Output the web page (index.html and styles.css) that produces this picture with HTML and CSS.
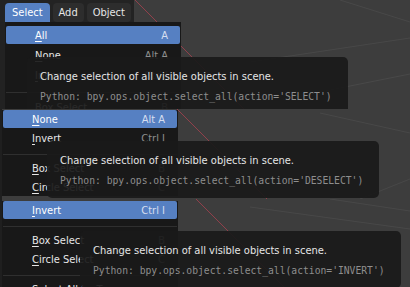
FILE: index.html
```html
<!DOCTYPE html>
<html lang="en">
<head>
  <meta charset="UTF-8" />
  <title>Select menu tooltips</title>
  <link rel="stylesheet" href="styles.css">
</head>
<body>
  <!-- Кадр 1: пункт All -->
  <section class="shot shot-all">
    <svg class="viewport" viewBox="0 0 410 109" preserveAspectRatio="none">
      <line x1="135" y1="0" x2="244" y2="109" class="axis-x"/>
      <line x1="250" y1="62" x2="410" y2="38" class="grid"/>
      <line x1="290" y1="98" x2="410" y2="74" class="grid"/>
      <line x1="340" y1="0" x2="410" y2="22" class="grid"/>
    </svg>
    <div class="header">
      <span class="tab active">Select</span>
      <span class="tab">Add</span>
      <span class="tab">Object</span>
    </div>
    <div class="menu">
      <div class="item active"><span><u>A</u>ll</span><span class="key">A</span></div>
      <div class="item"><span><u>N</u>one</span><span class="key">Alt A</span></div>
      <div class="item"><span><u>I</u>nvert</span><span class="key">Ctrl I</span></div>
      <div class="sep"></div>
      <div class="item"><span><u>B</u>ox Select</span><span class="key">B</span></div>
    </div>
    <div class="tip">
      <p>Change selection of all visible objects in scene.</p>
      <p class="py">Python: bpy.ops.object.select_all(action='SELECT')</p>
    </div>
  </section>

  <!-- Кадр 2: пункт None -->
  <section class="shot shot-none">
    <svg class="viewport" viewBox="0 0 410 90" preserveAspectRatio="none">
      <line x1="177" y1="0" x2="267" y2="90" class="axis-x"/>
      <line x1="320" y1="4" x2="410" y2="24" class="grid"/>
      <line x1="360" y1="90" x2="410" y2="70" class="grid"/>
    </svg>
    <div class="menu">
      <div class="item active"><span><u>N</u>one</span><span class="key">Alt A</span></div>
      <div class="item"><span><u>I</u>nvert</span><span class="key">Ctrl I</span></div>
      <div class="sep"></div>
      <div class="item"><span><u>B</u>ox Select</span><span class="key">B</span></div>
      <div class="item"><span><u>C</u>ircle Select</span><span class="key">C</span></div>
    </div>
    <div class="tip">
      <p>Change selection of all visible objects in scene.</p>
      <p class="py">Python: bpy.ops.object.select_all(action='DESELECT')</p>
    </div>
  </section>

  <!-- Кадр 3: пункт Invert -->
  <section class="shot shot-invert">
    <svg class="viewport" viewBox="0 0 410 88" preserveAspectRatio="none">
      <line x1="196" y1="0" x2="284" y2="88" class="axis-x"/>
      <line x1="250" y1="8" x2="410" y2="30" class="grid"/>
      <line x1="330" y1="0" x2="410" y2="12" class="grid"/>
    </svg>
    <div class="menu">
      <div class="item active"><span><u>I</u>nvert</span><span class="key">Ctrl I</span></div>
      <div class="sep"></div>
      <div class="item"><span><u>B</u>ox Select</span><span class="key">B</span></div>
      <div class="item"><span><u>C</u>ircle Select</span><span class="key">C</span></div>
      <div class="sep"></div>
      <div class="item"><span><u>S</u>elect All by Type</span><span class="key"></span></div>
    </div>
    <div class="tip">
      <p>Change selection of all visible objects in scene.</p>
      <p class="py">Python: bpy.ops.object.select_all(action='INVERT')</p>
    </div>
  </section>
</body>
</html>
```

FILE: styles.css
```css
:root {
  --accent: #5680c2;
  --menu-bg: #181818;
  --view-bg: #3d3d3d;
  --text: #e6e6e6;
  --dim: #8e8e8e;
}
* { box-sizing: border-box; }
body {
  margin: 0;
  background: var(--view-bg);
  color: var(--text);
  font-family: 'DejaVu Sans Condensed', 'DejaVu Sans', sans-serif;
  font-stretch: condensed;
  font-size: 11px;
  overflow: hidden;
}
u {
  text-decoration-thickness: 1px;
  text-underline-offset: 2px;
}
/* Кадры */
.shot {
  position: relative;
  overflow: hidden;
  background: var(--view-bg);
}
.shot-all {
  height: 109px;
  box-shadow: inset 5px 0 #222;
}
.shot-none {
  height: 90px;
  padding: 1px 0 0 2px;
  box-shadow: inset 2px 0 #1f1f1f;
}
.shot-invert {
  height: 88px;
  padding: 2px 0 0 2px;
  box-shadow: inset 2px 0 #1f1f1f;
}
.viewport {
  position: absolute;
  inset: 0;
  width: 100%;
  height: 100%;
}
.axis-x { stroke: #91404b; stroke-width: 1; }
.grid { stroke: rgba(255, 255, 255, 0.06); stroke-width: 1; }
/* Шапка */
.header {
  position: relative;
  display: flex;
  gap: 3px;
  width: 134px;
  height: 22px;
  padding: 3px 0 0 5px;
  background: #232323;
}
.tab {
  height: 19px;
  line-height: 19px;
  padding: 0 6px;
  border-radius: 4px;
  background: #2d2d2d;
}
.tab.active {
  padding: 0 7px;
  border-radius: 4px 4px 0 0;
  background: var(--accent);
  color: #fff;
}
/* Меню */
.menu {
  position: relative;
  width: 176px;
  padding: 0 1px;
  background: var(--menu-bg);
  display: flex;
  flex-direction: column;
  gap: 1px;
}
.shot-all .menu {
  margin-left: 5px;
  padding-top: 4px;
  gap: 2px;
}
.item {
  display: flex;
  justify-content: space-between;
  align-items: center;
  height: 18px;
  padding: 0 12px 0 29px;
  border-radius: 2px;
  white-space: nowrap;
}
.item.active {
  background: var(--accent);
  color: #fff;
}
.key { color: var(--dim); }
.item.active .key { color: #d6dff0; }
.sep {
  height: 1px;
  margin: 6px 0 3px;
  background: #2f2f2f;
}
/* Подсказки */
.tip {
  position: absolute;
  z-index: 2;
  padding: 12px 16px 9px 13px;
  background: rgba(26, 26, 26, 0.93);
  border-radius: 5px;
  white-space: nowrap;
}
.tip p {
  margin: 0;
  line-height: 16px;
}
.tip .py {
  margin-top: 4px;
  font-family: 'DejaVu Sans Mono', monospace;
  font-stretch: normal;
  font-size: 9.7px;
  color: var(--dim);
}
.shot-all .tip { left: 27px; top: 57px; }
.shot-none .tip { left: 47px; top: 32px; }
.shot-invert .tip { left: 80px; top: 32px; }
```
